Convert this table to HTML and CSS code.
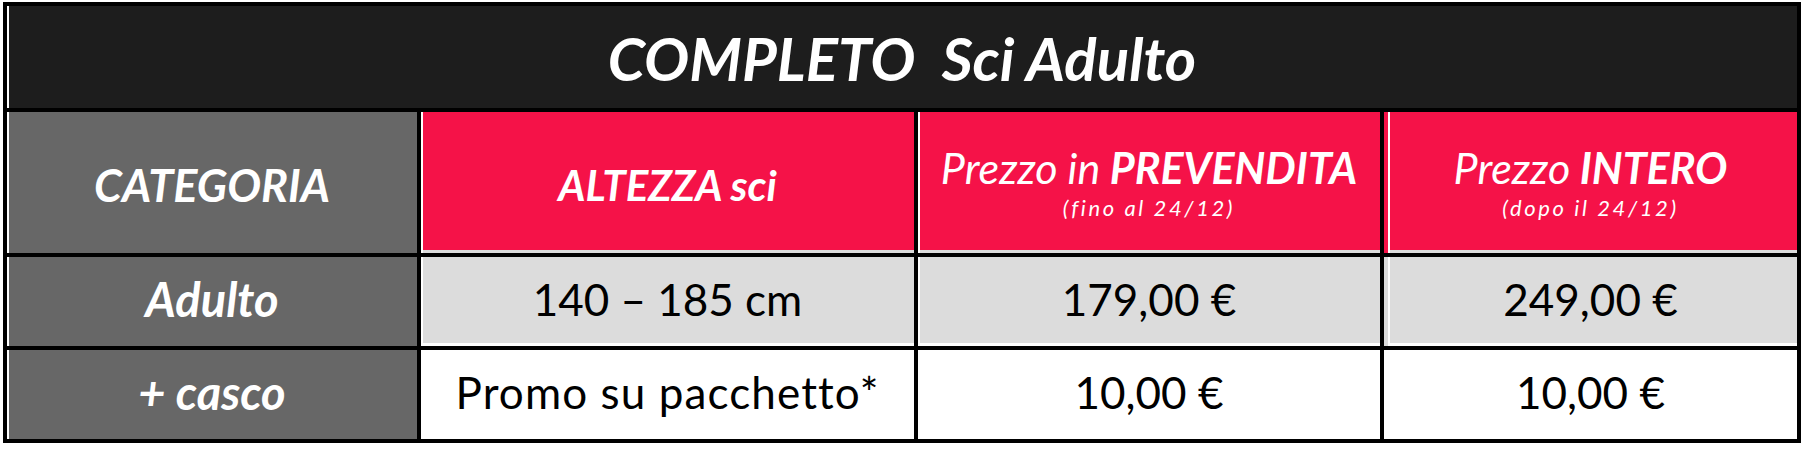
FILE: index.html
```html
<!DOCTYPE html>
<html lang="it">
<head>
<meta charset="utf-8">
<title>COMPLETO Sci Adulto</title>
<link rel="stylesheet" href="styles.css">
</head>
<body>
<div class="price-table">
  <div class="cell title">COMPLETO&nbsp; Sci Adulto</div>

  <div class="cell cat head wide">CATEGORIA</div>
  <div class="cell pink head">ALTEZZA sci</div>
  <div class="cell pink head stack">
    <div class="main"><span class="light">Prezzo in</span> <b>PREVENDITA</b></div>
    <div class="note">(fino al 24/12)</div>
  </div>
  <div class="cell pink head stack last">
    <div class="main"><span class="light">Prezzo</span> <b>INTERO</b></div>
    <div class="note">(dopo il 24/12)</div>
  </div>

  <div class="cell cat label">Adulto</div>
  <div class="cell grey data">140 – 185 cm</div>
  <div class="cell grey data">179,00 €</div>
  <div class="cell grey data last">249,00 €</div>

  <div class="cell cat label">+ casco</div>
  <div class="cell white data spaced">Promo su pacchetto*</div>
  <div class="cell white data">10,00 €</div>
  <div class="cell white data">10,00 €</div>
</div>
</body>
</html>
```

FILE: styles.css
```css
html, body {
  background: #ffffff;
}
body {
  margin: 2px 0 0 3px;
  font-family: Lato, "Open Sans", "Liberation Sans", sans-serif;
}
.price-table {
  width: 1798px;
  box-sizing: border-box;
  display: grid;
  grid-template-columns: 410px 493px 462px 413px;
  grid-template-rows: 102px 141px 89px 89px;
  gap: 4px;
  padding: 4px;
  background: #000000;
}
.cell {
  display: flex;
  flex-direction: column;
  align-items: center;
  justify-content: center;
  text-align: center;
  box-shadow: inset 2px 0 0 #ffffff;
}
.title {
  grid-column: 1 / -1;
  background: #1d1d1d;
  color: #ffffff;
  font-weight: 700;
  font-style: italic;
  font-size: 60px;
  padding-top: 2px;
}
.cat {
  background: #676767;
  color: #ffffff;
  font-style: italic;
  font-weight: 700;
}
.pink {
  background: #f51248;
  color: #ffffff;
  box-shadow: inset 2px 0 0 #ffffff, inset 0 -3px 0 #dcdcdc;
}
.pink.last {
  box-shadow: inset 4px 0 0 #f51248, inset 6px 0 0 #ffffff, inset 0 -3px 0 #dcdcdc;
}
.head {
  font-size: 42px;
  font-style: italic;
  font-weight: 700;
  padding-top: 4px;
}
.head.wide {
  font-size: 45px;
}
.stack {
  padding-top: 0;
}
.stack .main {
  font-size: 43px;
  line-height: 46px;
}
.stack .main b {
  font-weight: 700;
}
.stack .light {
  font-weight: 400;
}
.note {
  font-size: 22px;
  font-weight: 400;
  letter-spacing: 2.6px;
  line-height: 24px;
  margin-top: 5px;
}
.label {
  font-size: 47px;
  padding-bottom: 6px;
}
.grey {
  background: #dcdcdc;
  box-shadow: inset 2px 0 0 #ffffff, inset 0 -3px 0 #ffffff;
}
.grey.last {
  box-shadow: inset 4px 0 0 #dcdcdc, inset 6px 0 0 #ffffff, inset 0 -3px 0 #ffffff;
}
.white {
  background: #ffffff;
}
.data {
  color: #000000;
  font-size: 44px;
  font-weight: 400;
  padding-bottom: 6px;
}
.data.spaced {
  letter-spacing: 1.1px;
}
```
